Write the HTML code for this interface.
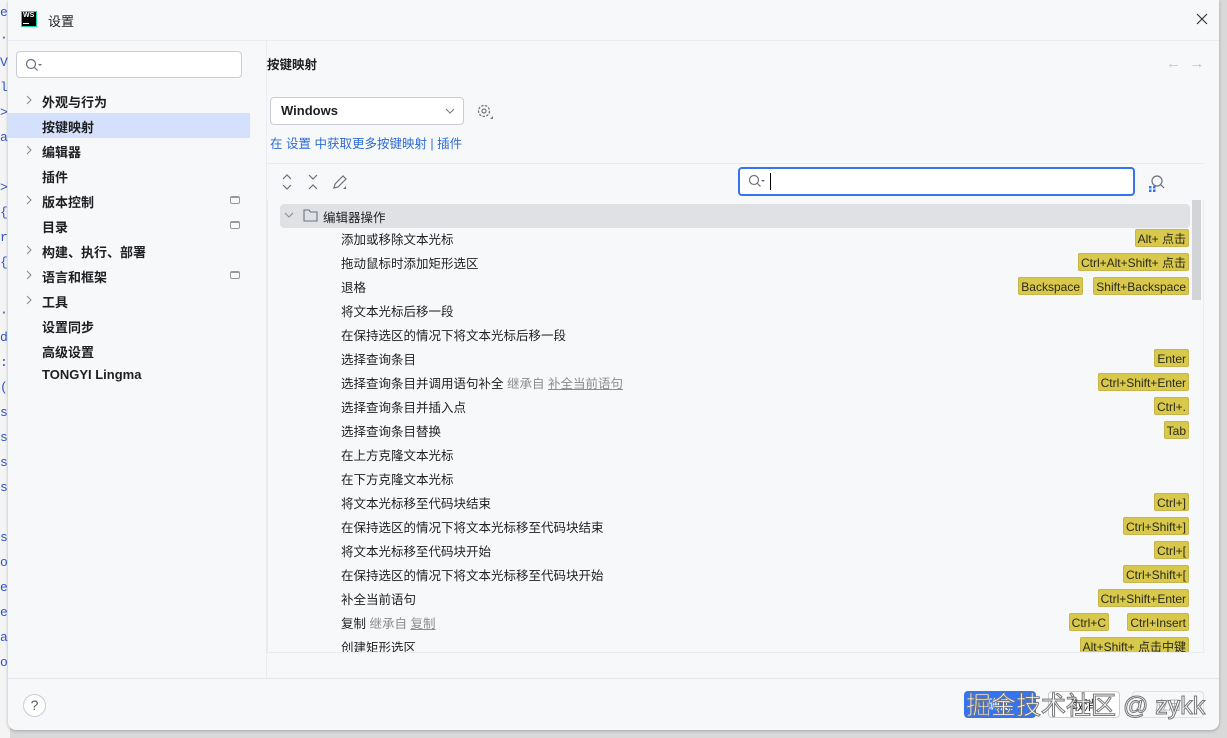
<!DOCTYPE html>
<html><head><meta charset="utf-8"><style>
*{margin:0;padding:0;box-sizing:border-box}
body{width:1227px;height:738px;overflow:hidden;background:#d9d9d9;font-family:"Liberation Sans","Noto Sans CJK SC",sans-serif;font-size:13px;color:#1e1f22;position:relative}
.abs{position:absolute}
#left{left:0;top:0;width:10px;height:738px;background:#f4f4f4;font-family:"Liberation Mono",monospace;font-size:13px;color:#2d54c7;line-height:25px;overflow:hidden}
#dlg{left:8px;top:0;width:1211px;height:730px;background:#f7f8fa;border-radius:0 0 8px 8px;box-shadow:0 1px 3px rgba(0,0,0,.25);overflow:hidden}
.side{position:absolute;left:34px;font-size:13px;font-weight:bold;color:#1e1f22}
.chev{position:absolute;left:16px;width:10px;height:10px}
.dbi{position:absolute;left:222px;width:10px;height:8px;border:1px solid #999;border-radius:2px;border-top-width:2px}
.row{position:absolute;left:333px;font-size:12.5px;height:24px;line-height:24px;white-space:nowrap}
.row .g{color:#8c8c8c}
.row .u{color:#8c8c8c;text-decoration:underline}
.b{position:absolute;height:18px;line-height:18px;background:#d8c84c;border:1px solid #c9b548;border-radius:2px;padding:0 2px;font-size:12px;color:#2a2a1a;white-space:nowrap}
.btn{position:absolute;top:691px;width:72px;height:27px;border-radius:4px;font-size:13px;text-align:center;line-height:27px}
</style></head><body>
<div id="left" class="abs">e<br>·<br>V<br>l<br>&gt;<br>a<br><br>&gt;<br>{<br>r<br>{<br><br>·<br>d<br>:<br>(<br>s<br>s<br>s<br>s<br><br>s<br>o<br>e<br>e<br>a<br>o</div>
<div id="dlg" class="abs">
  <div class="abs" style="left:13px;top:11px;width:16px;height:16px;background:#000;border:1px solid #21d789;color:#fff;font-size:7px;font-weight:bold;line-height:8px;padding-left:1px">WS<div style="width:6px;height:1px;background:#fff;margin-top:3px"></div></div>
  <div class="abs" style="left:40px;top:11px;font-size:13px">设置</div>
  <svg class="abs" style="left:1188px;top:13px" width="12" height="12"><path d="M1 1L11 11M11 1L1 11" stroke="#333" stroke-width="1.2"/></svg>
  <div class="abs" style="left:0;top:40px;width:1211px;height:1px;background:#ebecf0"></div>
  <div class="abs" style="left:8px;top:51px;width:226px;height:27px;background:#fff;border:1px solid #c9ccd6;border-radius:4px"></div>
  <svg class="abs" style="left:17px;top:58px" width="18" height="14"><circle cx="6" cy="6" r="4.5" fill="none" stroke="#6c707e" stroke-width="1.2"/><path d="M9.5 9.5L12.5 12.5" stroke="#6c707e" stroke-width="1.2"/><path d="M13 6h4l-2 2z" fill="#6c707e"/></svg>
  <div class="abs" style="left:0;top:113px;width:242px;height:25px;background:#d5e1fc"></div>
  <svg class="chev" style="top:95px"><path d="M3 1l4 4-4 4" fill="none" stroke="#888"/></svg><div class="side" style="top:92px">外观与行为</div>
  <div class="side" style="top:117px">按键映射</div>
  <svg class="chev" style="top:145px"><path d="M3 1l4 4-4 4" fill="none" stroke="#888"/></svg><div class="side" style="top:142px">编辑器</div>
  <div class="side" style="top:167px">插件</div>
  <svg class="chev" style="top:195px"><path d="M3 1l4 4-4 4" fill="none" stroke="#888"/></svg><div class="side" style="top:192px">版本控制</div><div class="dbi" style="top:196px"></div>
  <div class="side" style="top:217px">目录</div><div class="dbi" style="top:221px"></div>
  <svg class="chev" style="top:245px"><path d="M3 1l4 4-4 4" fill="none" stroke="#888"/></svg><div class="side" style="top:242px">构建、执行、部署</div>
  <svg class="chev" style="top:270px"><path d="M3 1l4 4-4 4" fill="none" stroke="#888"/></svg><div class="side" style="top:267px">语言和框架</div><div class="dbi" style="top:271px"></div>
  <svg class="chev" style="top:295px"><path d="M3 1l4 4-4 4" fill="none" stroke="#888"/></svg><div class="side" style="top:292px">工具</div>
  <div class="side" style="top:317px">设置同步</div>
  <div class="side" style="top:342px">高级设置</div>
  <div class="side" style="top:367px">TONGYI Lingma</div>
  <div class="abs" style="left:258px;top:40px;width:1px;height:638px;background:#ebecf0"></div>
  <div class="abs" style="left:259px;top:54px;font-size:12.5px;font-weight:bold">按键映射</div>
  <div class="abs" style="left:1158px;top:55px;color:#c4c4c4;font-size:15px">←&nbsp;&nbsp;→</div>
  <div class="abs" style="left:262px;top:97px;width:194px;height:28px;background:#fff;border:1px solid #c9ccd6;border-radius:4px;font-weight:bold;font-size:13px;line-height:26px;padding-left:10px">Windows<svg style="position:absolute;right:8px;top:10px" width="10" height="6"><path d="M1 1l4 4 4-4" fill="none" stroke="#777"/></svg></div>
  <svg class="abs" style="left:468px;top:103px" width="18" height="18"><circle cx="8" cy="8" r="5.5" fill="none" stroke="#777" stroke-width="1.3" stroke-dasharray="2.5 1.3"/><circle cx="8" cy="8" r="2" fill="none" stroke="#777" stroke-width="1.2"/><path d="M14 16h3v-3z" fill="#777"/></svg>
  <div class="abs" style="left:262px;top:133px;font-size:12.5px;color:#2e6bd6">在 设置 中获取更多按键映射 | 插件</div>
  <div class="abs" style="left:259px;top:163px;width:937px;height:1px;background:#ebecf0"></div>
  <svg class="abs" style="left:272px;top:173px" width="80" height="18"><path d="M3 6l4-4 4 4M3 12l4 4 4-4" fill="none" stroke="#6c707e" stroke-width="1.2"/><path d="M29 2l4 4 4-4M29 16l4-4 4 4" fill="none" stroke="#6c707e" stroke-width="1.2"/><path d="M54 15l1-4 8-8 3 3-8 8z" fill="none" stroke="#6c707e" stroke-width="1.2"/><path d="M63 16h3v-3z" fill="#6c707e"/></svg>
  <div class="abs" style="left:730px;top:167px;width:397px;height:29px;background:#fff;border:2px solid #3574f0;border-radius:4px"></div>
  <svg class="abs" style="left:740px;top:174px" width="20" height="14"><circle cx="6" cy="6" r="4.5" fill="none" stroke="#6c707e" stroke-width="1.2"/><path d="M9.5 9.5L12.5 12.5" stroke="#6c707e" stroke-width="1.2"/><path d="M13 6h4l-2 2z" fill="#6c707e"/></svg>
  <div class="abs" style="left:762px;top:173px;width:1px;height:17px;background:#000"></div>
  <svg class="abs" style="left:1140px;top:174px" width="18" height="18"><circle cx="9" cy="7" r="5" fill="none" stroke="#6c707e" stroke-width="1.2"/><path d="M12.5 10.5L16 14" stroke="#6c707e" stroke-width="1.2"/><rect x="1" y="12" width="2.5" height="2.5" fill="#3574f0"/><rect x="5" y="12" width="2.5" height="2.5" fill="#3574f0"/><rect x="1" y="15.5" width="2.5" height="2.5" fill="#3574f0"/><rect x="5" y="15.5" width="2.5" height="2.5" fill="#3574f0"/></svg>
  <div class="abs" style="left:259px;top:200px;width:937px;height:453px;border:1px solid #ebecf0;border-top:none;overflow:hidden">
    <div class="abs" style="left:12px;top:4px;width:910px;height:24px;background:#dfe1e5;border-radius:4px"></div>
    <div class="abs" style="left:924px;top:0;width:9px;height:100px;background:#d3d4d8"></div>
    <svg class="abs" style="left:16px;top:12px" width="10" height="6"><path d="M1 1l4 4 4-4" fill="none" stroke="#888"/></svg>
    <svg class="abs" style="left:35px;top:8px" width="16" height="14"><path d="M1 2h5l1.5 2H14v9H1z" fill="none" stroke="#6c707e" stroke-width="1.1"/></svg>
    <div class="abs" style="left:55px;top:7px;font-size:12.5px">编辑器操作</div>
  </div>
  <div class="row" style="top:228px">添加或移除文本光标</div>
  <div class="row" style="top:252px">拖动鼠标时添加矩形选区</div>
  <div class="row" style="top:276px">退格</div>
  <div class="row" style="top:300px">将文本光标后移一段</div>
  <div class="row" style="top:324px">在保持选区的情况下将文本光标后移一段</div>
  <div class="row" style="top:348px">选择查询条目</div>
  <div class="row" style="top:372px">选择查询条目并调用语句补全 <span class="g">继承自</span> <span class="u">补全当前语句</span></div>
  <div class="row" style="top:396px">选择查询条目并插入点</div>
  <div class="row" style="top:420px">选择查询条目替换</div>
  <div class="row" style="top:444px">在上方克隆文本光标</div>
  <div class="row" style="top:468px">在下方克隆文本光标</div>
  <div class="row" style="top:492px">将文本光标移至代码块结束</div>
  <div class="row" style="top:516px">在保持选区的情况下将文本光标移至代码块结束</div>
  <div class="row" style="top:540px">将文本光标移至代码块开始</div>
  <div class="row" style="top:564px">在保持选区的情况下将文本光标移至代码块开始</div>
  <div class="row" style="top:588px">补全当前语句</div>
  <div class="row" style="top:612px">复制 <span class="g">继承自</span> <span class="u">复制</span></div>
  <div class="row" style="top:636px;height:16px;overflow:hidden;line-height:24px">创建矩形选区</div>
  <div class="b" style="right:30px;top:229px">Alt+ 点击</div>
  <div class="b" style="right:30px;top:253px">Ctrl+Alt+Shift+ 点击</div>
  <div class="b" style="right:136px;top:277px">Backspace</div>
  <div class="b" style="right:30px;top:277px">Shift+Backspace</div>
  <div class="b" style="right:30px;top:349px">Enter</div>
  <div class="b" style="right:30px;top:373px">Ctrl+Shift+Enter</div>
  <div class="b" style="right:30px;top:397px">Ctrl+.</div>
  <div class="b" style="right:30px;top:421px">Tab</div>
  <div class="b" style="right:30px;top:493px">Ctrl+]</div>
  <div class="b" style="right:30px;top:517px">Ctrl+Shift+]</div>
  <div class="b" style="right:30px;top:541px">Ctrl+[</div>
  <div class="b" style="right:30px;top:565px">Ctrl+Shift+[</div>
  <div class="b" style="right:30px;top:589px">Ctrl+Shift+Enter</div>
  <div class="b" style="right:110px;top:613px">Ctrl+C</div>
  <div class="b" style="right:30px;top:613px">Ctrl+Insert</div>
  <div class="abs" style="right:30px;top:637px;height:15px;width:130px;overflow:hidden"><div class="b" style="right:0;top:0">Alt+Shift+ 点击中键</div></div>
  <div class="abs" style="left:0;top:678px;width:1211px;height:1px;background:#e4e5e8"></div>
  <div class="abs" style="left:15px;top:694px;width:23px;height:23px;border:1px solid #c9ccd6;border-radius:50%;background:#fff;text-align:center;line-height:21px;color:#555;font-size:14px">?</div>
  <div class="btn" style="left:956px;background:#3574f0;color:#fff">确定</div>
  <div class="btn" style="left:1040px;background:#fff;border:1px solid #c9ccd6">取消</div>
  <div class="btn" style="left:1124px;background:#f7f8fa;border:1px solid #e0e0e0;color:#aaa">应用</div>
  <div class="abs" style="left:958px;top:686px;font-size:25px;color:#fff;-webkit-text-stroke:1px #777;white-space:nowrap">掘金技术社区 @ zykk</div>
</div>
</body></html>
